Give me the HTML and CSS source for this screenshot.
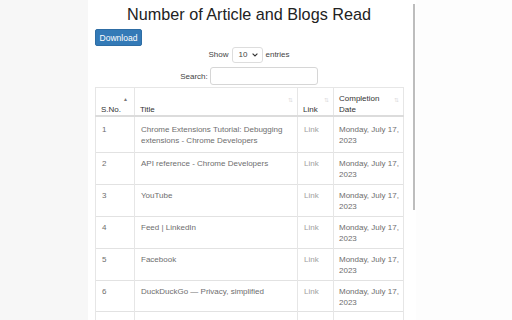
FILE: index.html
```html
<!DOCTYPE html>
<html>
<head>
<meta charset="utf-8">
<link rel="stylesheet" href="styles.css">
</head>
<body>
<div class="page">
  <div class="gutter"></div>
  <div class="popup">
    <div class="content">
      <h1 class="title">Number of Article and Blogs Read</h1>
      <button class="btn">Download</button>
      <div class="length">
        <span>Show</span>
        <span class="select">10
          <svg class="chev" width="6" height="4" viewBox="0 0 6 4"><path d="M0.6 0.6 L3 3 L5.4 0.6" fill="none" stroke="#333" stroke-width="1.1"/></svg>
        </span>
        <span>entries</span>
      </div>
      <div class="filter">
        <span>Search:</span>
        <span class="input"></span>
      </div>
      <table class="grid">
        <colgroup>
          <col class="c1"><col class="c2"><col class="c3"><col class="c4">
        </colgroup>
        <thead>
          <tr>
            <th>S.No.<span class="sort asc">▲</span></th>
            <th>Title<span class="sort both">⇅</span></th>
            <th>Link<span class="sort both">⇅</span></th>
            <th>Completion Date<span class="sort both">⇅</span></th>
          </tr>
        </thead>
        <tbody>
          <tr><td>1</td><td>Chrome Extensions Tutorial: Debugging extensions - Chrome Developers</td><td class="lnk">Link</td><td class="date">Monday, July 17, 2023</td></tr>
          <tr><td>2</td><td>API reference - Chrome Developers</td><td class="lnk">Link</td><td class="date">Monday, July 17, 2023</td></tr>
          <tr><td>3</td><td>YouTube</td><td class="lnk">Link</td><td class="date">Monday, July 17, 2023</td></tr>
          <tr><td>4</td><td>Feed | LinkedIn</td><td class="lnk">Link</td><td class="date">Monday, July 17, 2023</td></tr>
          <tr><td>5</td><td>Facebook</td><td class="lnk">Link</td><td class="date">Monday, July 17, 2023</td></tr>
          <tr><td>6</td><td>DuckDuckGo — Privacy, simplified</td><td class="lnk">Link</td><td class="date">Monday, July 17, 2023</td></tr>
          <tr class="tail"><td></td><td></td><td></td><td></td></tr>
        </tbody>
      </table>
    </div>
    <div class="scroll"></div>
  </div>
  <div class="rest"></div>
</div>
</body>
</html>
```
FILE: styles.css
```css
html, body {
  margin: 0;
  padding: 0;
  height: 320px;
  overflow: hidden;
}
body {
  background: #f7f7f7;
  font-family: "Liberation Sans", Arial, sans-serif;
}
.page {
  display: flex;
  height: 320px;
}
.gutter {
  width: 88px;
  flex: none;
}
.popup {
  width: 328px;
  flex: none;
  background: #fff;
  position: relative;
  overflow: hidden;
}
.rest {
  flex: 1;
  background: #fdfdfd;
}
.content {
  padding: 0 13px 0 7px;
}
.title {
  margin: 0;
  padding-top: 4px;
  font-size: 16.2px;
  line-height: 20px;
  font-weight: normal;
  text-align: center;
  color: #222;
}
.btn {
  display: block;
  margin-top: 5px;
  height: 17px;
  width: 47px;
  padding: 0;
  font-family: inherit;
  font-size: 8.5px;
  color: #fff;
  background: #337ab7;
  border: 1px solid #2e6da4;
  border-radius: 2px;
}
.length {
  margin-top: 0px;
  display: flex;
  justify-content: center;
  align-items: center;
  gap: 3px;
  font-size: 8px;
  color: #444;
  height: 17px;
}
.select {
  display: inline-flex;
  align-items: center;
  justify-content: space-between;
  box-sizing: border-box;
  width: 31px;
  height: 16px;
  padding: 0 4px 0 6px;
  border: 1px solid #ddd;
  border-radius: 3px;
  font-size: 8px;
}
.filter {
  margin-top: 4px;
  display: flex;
  justify-content: center;
  align-items: center;
  gap: 2px;
  font-size: 8px;
  color: #444;
  height: 18px;
}
.input {
  display: inline-block;
  box-sizing: border-box;
  width: 108px;
  height: 18px;
  border: 1px solid #d6d6d6;
  border-radius: 3px;
}
.grid {
  margin-top: 2px;
  width: 308px;
  border-collapse: collapse;
  table-layout: fixed;
  font-size: 8px;
  line-height: 11px;
}
.c1 { width: 39px; }
.c2 { width: 163px; }
.c3 { width: 36px; }
.c4 { width: 70px; }
.grid th, .grid td {
  border-left: 1px solid #e6e6e6;
  border-right: 1px solid #e6e6e6;
  text-align: left;
}
.grid th {
  position: relative;
  vertical-align: bottom;
  padding: 5px 12px 0 5px;
  height: 22px;
  border-top: 1px solid #e6e6e6;
  border-bottom: 2px solid #dcdcdc;
  color: #333;
  font-weight: normal;
  font-size: 8px;
}
.grid td {
  vertical-align: top;
  padding: 5px 5px 3.8px 6px;
  border-top: 1px solid #e2e2e2;
  color: #6e6e6e;
}
.grid td.date {
  padding-left: 5px;
  padding-right: 1px;
}
.grid tbody tr:first-child td {
  padding-top: 7px;
  padding-bottom: 6.4px;
}
.grid tr.tail td {
  height: 22px;
}
.grid td.lnk {
  color: #a0a0a0;
}
.sort {
  position: absolute;
  right: 4px;
  top: 9px;
  font-size: 6px;
  line-height: 7px;
  color: #ddd;
}
.sort.asc {
  top: 8px;
  right: 6px;
  font-size: 5px;
  color: #777;
}
.scroll {
  position: absolute;
  top: 4px;
  right: 1px;
  width: 2px;
  height: 206px;
  background: #bdbdbd;
}
```
